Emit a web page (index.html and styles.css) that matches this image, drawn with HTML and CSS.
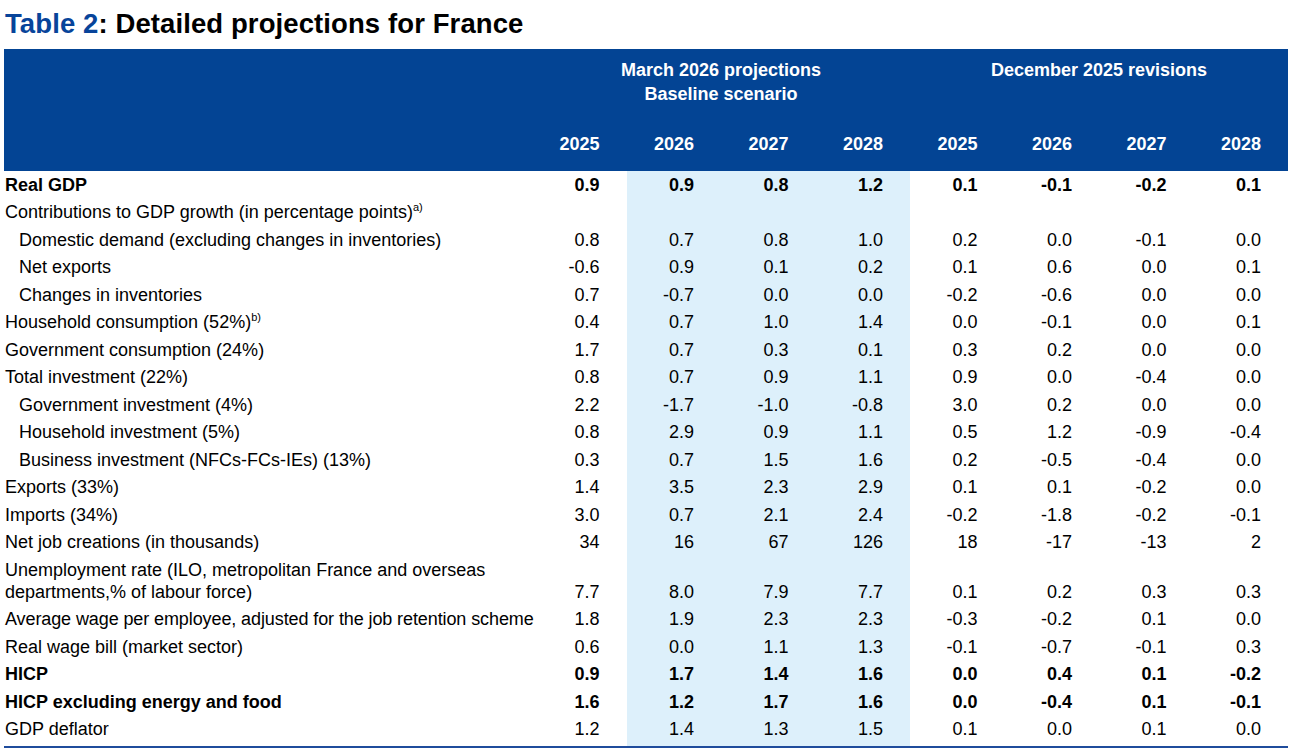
FILE: index.html
```html
<!DOCTYPE html>
<html>
<head>
<meta charset="utf-8">
<link rel="stylesheet" href="styles.css">
</head>
<body>
<div class="page">
  <h1 class="title"><span class="tnum">Table 2</span>: Detailed projections for France</h1>
  <table class="proj">
    <colgroup>
      <col class="c-label">
      <col class="c-num"><col class="c-num"><col class="c-num"><col class="c-num">
      <col class="c-num"><col class="c-num"><col class="c-num"><col class="c-num">
    </colgroup>
    <thead>
      <tr class="h-group">
        <th></th>
        <th colspan="4">March 2026 projections<br>Baseline scenario</th>
        <th colspan="4">December 2025 revisions</th>
      </tr>
      <tr class="h-years">
        <th></th>
        <th>2025</th><th>2026</th><th>2027</th><th>2028</th>
        <th>2025</th><th>2026</th><th>2027</th><th>2028</th>
      </tr>
    </thead>
    <tbody>
      <tr class="bold"><td class="lbl">Real GDP</td><td>0.9</td><td class="hl">0.9</td><td class="hl">0.8</td><td class="hl">1.2</td><td>0.1</td><td>-0.1</td><td>-0.2</td><td>0.1</td></tr>
      <tr><td class="lbl">Contributions to GDP growth (in percentage points)<sup>a)</sup></td><td></td><td class="hl"></td><td class="hl"></td><td class="hl"></td><td></td><td></td><td></td><td></td></tr>
      <tr><td class="lbl sub">Domestic demand (excluding changes in inventories)</td><td>0.8</td><td class="hl">0.7</td><td class="hl">0.8</td><td class="hl">1.0</td><td>0.2</td><td>0.0</td><td>-0.1</td><td>0.0</td></tr>
      <tr><td class="lbl sub">Net exports</td><td>-0.6</td><td class="hl">0.9</td><td class="hl">0.1</td><td class="hl">0.2</td><td>0.1</td><td>0.6</td><td>0.0</td><td>0.1</td></tr>
      <tr><td class="lbl sub">Changes in inventories</td><td>0.7</td><td class="hl">-0.7</td><td class="hl">0.0</td><td class="hl">0.0</td><td>-0.2</td><td>-0.6</td><td>0.0</td><td>0.0</td></tr>
      <tr><td class="lbl">Household consumption (52%)<sup>b)</sup></td><td>0.4</td><td class="hl">0.7</td><td class="hl">1.0</td><td class="hl">1.4</td><td>0.0</td><td>-0.1</td><td>0.0</td><td>0.1</td></tr>
      <tr><td class="lbl">Government consumption (24%)</td><td>1.7</td><td class="hl">0.7</td><td class="hl">0.3</td><td class="hl">0.1</td><td>0.3</td><td>0.2</td><td>0.0</td><td>0.0</td></tr>
      <tr><td class="lbl">Total investment (22%)</td><td>0.8</td><td class="hl">0.7</td><td class="hl">0.9</td><td class="hl">1.1</td><td>0.9</td><td>0.0</td><td>-0.4</td><td>0.0</td></tr>
      <tr><td class="lbl sub">Government investment (4%)</td><td>2.2</td><td class="hl">-1.7</td><td class="hl">-1.0</td><td class="hl">-0.8</td><td>3.0</td><td>0.2</td><td>0.0</td><td>0.0</td></tr>
      <tr><td class="lbl sub">Household investment (5%)</td><td>0.8</td><td class="hl">2.9</td><td class="hl">0.9</td><td class="hl">1.1</td><td>0.5</td><td>1.2</td><td>-0.9</td><td>-0.4</td></tr>
      <tr><td class="lbl sub">Business investment (NFCs-FCs-IEs) (13%)</td><td>0.3</td><td class="hl">0.7</td><td class="hl">1.5</td><td class="hl">1.6</td><td>0.2</td><td>-0.5</td><td>-0.4</td><td>0.0</td></tr>
      <tr><td class="lbl">Exports (33%)</td><td>1.4</td><td class="hl">3.5</td><td class="hl">2.3</td><td class="hl">2.9</td><td>0.1</td><td>0.1</td><td>-0.2</td><td>0.0</td></tr>
      <tr><td class="lbl">Imports (34%)</td><td>3.0</td><td class="hl">0.7</td><td class="hl">2.1</td><td class="hl">2.4</td><td>-0.2</td><td>-1.8</td><td>-0.2</td><td>-0.1</td></tr>
      <tr><td class="lbl">Net job creations (in thousands)</td><td>34</td><td class="hl">16</td><td class="hl">67</td><td class="hl">126</td><td>18</td><td>-17</td><td>-13</td><td>2</td></tr>
      <tr class="tall"><td class="lbl">Unemployment rate (ILO, metropolitan France and overseas<br>departments,% of labour force)</td><td>7.7</td><td class="hl">8.0</td><td class="hl">7.9</td><td class="hl">7.7</td><td>0.1</td><td>0.2</td><td>0.3</td><td>0.3</td></tr>
      <tr><td class="lbl tight">Average wage per employee, adjusted for the job retention scheme</td><td>1.8</td><td class="hl">1.9</td><td class="hl">2.3</td><td class="hl">2.3</td><td>-0.3</td><td>-0.2</td><td>0.1</td><td>0.0</td></tr>
      <tr><td class="lbl">Real wage bill (market sector)</td><td>0.6</td><td class="hl">0.0</td><td class="hl">1.1</td><td class="hl">1.3</td><td>-0.1</td><td>-0.7</td><td>-0.1</td><td>0.3</td></tr>
      <tr class="bold"><td class="lbl">HICP</td><td>0.9</td><td class="hl">1.7</td><td class="hl">1.4</td><td class="hl">1.6</td><td>0.0</td><td>0.4</td><td>0.1</td><td>-0.2</td></tr>
      <tr class="bold"><td class="lbl">HICP excluding energy and food</td><td>1.6</td><td class="hl">1.2</td><td class="hl">1.7</td><td class="hl">1.6</td><td>0.0</td><td>-0.4</td><td>0.1</td><td>-0.1</td></tr>
      <tr class="last"><td class="lbl">GDP deflator</td><td>1.2</td><td class="hl">1.4</td><td class="hl">1.3</td><td class="hl">1.5</td><td>0.1</td><td>0.0</td><td>0.1</td><td>0.0</td></tr>
    </tbody>
  </table>
</div>
</body>
</html>
```

FILE: styles.css
```css
html, body {
  margin: 0;
  padding: 0;
  background: #ffffff;
}

body {
  font-family: "Liberation Sans", Arial, sans-serif;
  color: #000000;
}

.page {
  padding: 0 0 0 4px;
  width: 1284px;
}

.title {
  margin: 0;
  padding: 9px 0 0 1px;
  height: 49px;
  box-sizing: border-box;
  font-size: 27.5px;
  line-height: 30px;
  font-weight: bold;
  color: #000000;
  white-space: nowrap;
  letter-spacing: 0.1px;
}

.tnum {
  color: #07449a;
}

.proj {
  width: 1284px;
  table-layout: fixed;
  border-collapse: collapse;
  border-bottom: 2px solid #1f4c9c;
  font-size: 18px;
}

.c-label {
  width: 528px;
}

.c-num {
  width: 94.5px;
}

.proj thead th {
  background: #034494;
  color: #ffffff;
  font-weight: bold;
  box-sizing: border-box;
}

.proj .h-group th {
  height: 80px;
  vertical-align: top;
  text-align: center;
  line-height: 24px;
  padding: 9px 0 0 0;
}

.proj .h-years th {
  height: 42px;
  vertical-align: top;
  text-align: right;
  line-height: 22px;
  padding: 4px 27px 0 0;
}

.proj td {
  padding: 2.75px 27px 2.75px 0;
  line-height: 22px;
  text-align: right;
  vertical-align: bottom;
  white-space: nowrap;
}

.proj td.lbl {
  text-align: left;
  padding-left: 1px;
  padding-right: 0;
}

.proj td.sub {
  padding-left: 15px;
}

.proj td.tight {
  letter-spacing: -0.1px;
}

.proj td.hl {
  background: #ddf0fb;
}

.bold td {
  font-weight: bold;
}

.last td {
  padding-bottom: 6px;
}

sup {
  font-size: 11px;
  line-height: 0;
  vertical-align: 7px;
}
```
